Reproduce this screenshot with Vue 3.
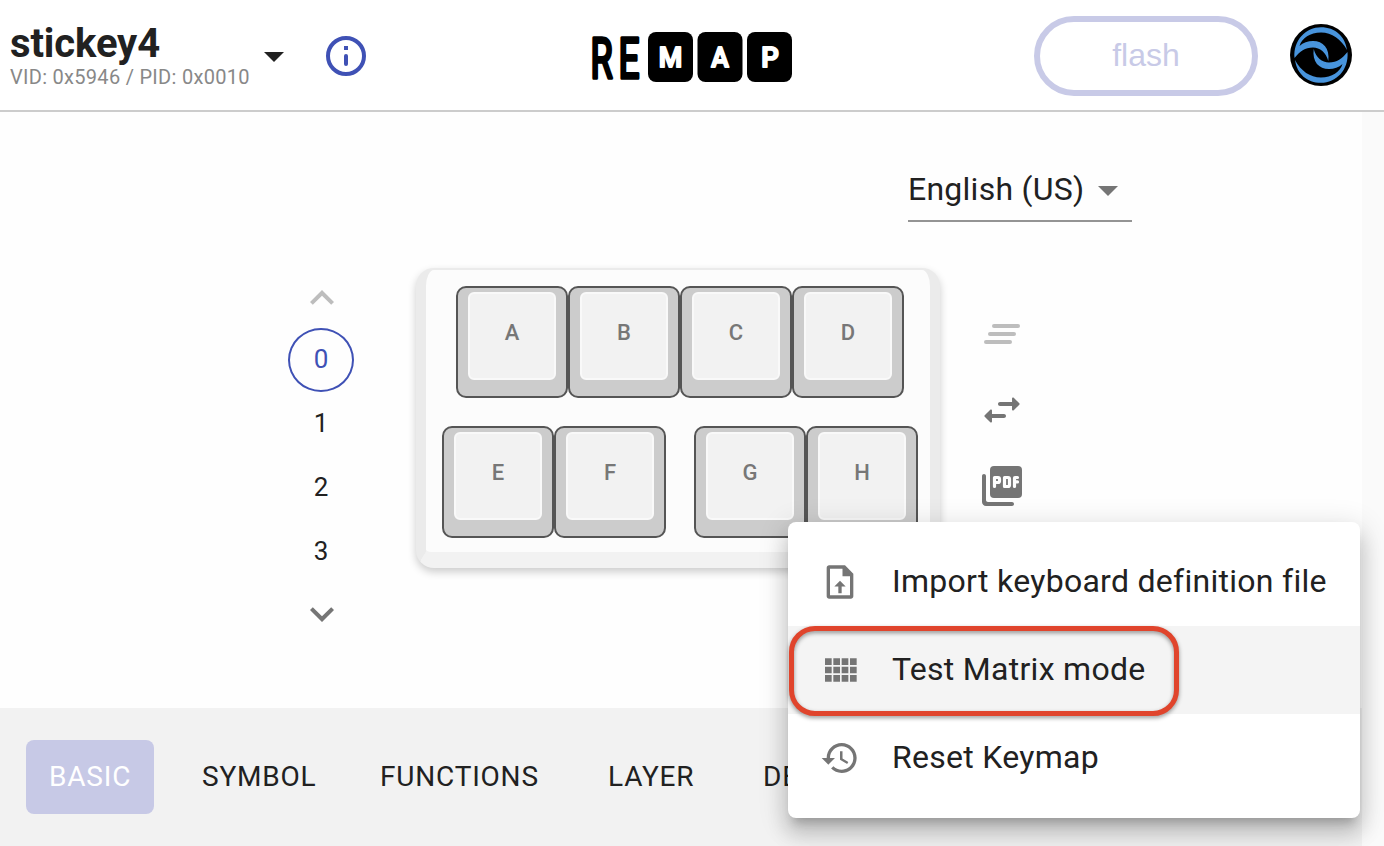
<script setup>
const layers = ['0', '1', '2', '3']
const rows = [
  [{ label: 'A' }, { label: 'B' }, { label: 'C' }, { label: 'D' }],
  [{ label: 'E' }, { label: 'F' }, { label: 'G', gap: true }, { label: 'H' }],
]
const tabs = ['BASIC', 'SYMBOL', 'FUNCTIONS', 'LAYER', 'DEVICE']
const swirl = 'M4.500 34C3 16 16 3.200 31 3.200C45 3.200 55 12 57 26C51 15 42 8.500 31 8.500C20 8.500 12 14 9.500 22C13 18.500 18 17 23 17C33 17 40 24 38.300 37C36 28.500 30 23.500 23 23.500C15 23.500 10 27.500 4.500 34z'
</script>

<template>
  <div class="page">
    <header class="header">
      <div class="device">
        <div class="device-name">stickey4</div>
        <div class="device-id">VID: 0x5946 / PID: 0x0010</div>
      </div>
      <svg class="caret" viewBox="0 0 20 10"><path d="M0 0h20L10 10z" /></svg>
      <svg class="info" viewBox="0 0 24 24">
        <circle cx="12" cy="12" r="9" fill="none" stroke="currentColor" stroke-width="2" />
        <rect x="11" y="7" width="2" height="2" />
        <rect x="11" y="11" width="2" height="6" rx="1" />
      </svg>
      <svg class="logo" viewBox="0 0 202 52">
        <g class="logo-dark">
          <text transform="translate(-.6 46.500) scale(.64 1)">R</text>
          <text transform="translate(27.500 46.500) scale(.66 1)">E</text>
        </g>
        <rect x="57" y="1" width="45" height="50" rx="8" />
        <rect x="106.500" y="1" width="45" height="50" rx="8" />
        <rect x="156" y="1" width="45" height="50" rx="8" />
        <g class="logo-light">
          <text x="79.500" y="35.800" textLength="23.500" lengthAdjust="spacingAndGlyphs">M</text>
          <text x="129" y="35.800" textLength="17.500" lengthAdjust="spacingAndGlyphs">A</text>
          <text x="179" y="35.800" textLength="17.500" lengthAdjust="spacingAndGlyphs">P</text>
        </g>
      </svg>
      <button class="flash">flash</button>
      <svg class="avatar" viewBox="0 0 62 62">
        <circle cx="31" cy="31" r="31" fill="#000" />
        <g fill="#4894dc">
          <path :d="swirl" />
          <path :d="swirl" transform="rotate(180 31 31)" />
        </g>
      </svg>
    </header>

    <main class="content">
      <div class="language">
        <span>English (US)</span>
        <svg class="select-caret" viewBox="0 0 20 10"><path d="M0 0h20L10 10z" /></svg>
      </div>

      <section class="workspace">
        <nav class="layers">
          <svg class="icon chevron faded" viewBox="0 0 24 24"><path d="M12 8l-6 6 1.410 1.410L12 10.830l4.590 4.580L18 14z" /></svg>
          <div v-for="(layer, i) in layers" :key="layer" class="layer" :class="{ active: i === 0 }">{{ layer }}</div>
          <svg class="icon chevron last" viewBox="0 0 24 24"><path d="M16.590 8.590L12 13.170 7.410 8.590 6 10l6 6 6-6z" /></svg>
        </nav>

        <div class="keyboard">
          <div v-for="(row, r) in rows" :key="r" class="key-row" :class="{ lower: r === 1 }">
            <div v-for="key in row" :key="key.label" class="key" :class="{ spaced: key.gap }">
              <div class="keycap">{{ key.label }}</div>
            </div>
          </div>
        </div>

        <div class="tools">
          <svg class="icon faded" viewBox="0 0 24 24">
            <rect x="7" y="7" width="14" height="2" rx="1" />
            <rect x="5" y="11" width="14" height="2" rx="1" />
            <rect x="3" y="15" width="14" height="2" rx="1" />
          </svg>
          <svg class="icon" viewBox="0 0 24 24"><path d="M6.140 11.860l-2.780 2.790c-.19.2-.19.51 0 .71l2.780 2.790c.31.32.85.09.85-.35V16H13c.55 0 1-.45 1-1s-.45-1-1-1H6.990v-1.790c0-.45-.54-.67-.85-.35zm14.510-3.210l-2.780-2.790c-.31-.32-.85-.09-.85.35V8H11c-.55 0-1 .45-1 1s.45 1 1 1h6.010v1.790c0 .45.54.67.85.35l2.780-2.790c.2-.19.2-.51.01-.7z" /></svg>
          <svg class="icon" viewBox="0 0 24 24">
            <rect x="6" y="2" width="16" height="16" rx="2" />
            <path d="M3 6c-.55 0-1 .45-1 1v13c0 1.100.9 2 2 2h13c.55 0 1-.45 1-1s-.45-1-1-1H5c-.55 0-1-.45-1-1V7c0-.55-.45-1-1-1z" />
            <path class="cutout" d="M8.250 12.250V7.750H10a.75.75 0 0 1 .75.75v1a.75.75 0 0 1-.75.75H8.250M13.250 7.750h1.750a.75.75 0 0 1 .75.75v3a.75.75 0 0 1-.75.75h-1.750zM18.250 12.250V8q0-.25.25-.25h1.250M18.250 9.950h1.500" />
          </svg>
        </div>
      </section>

      <nav class="tabs">
        <div v-for="(tab, i) in tabs" :key="tab" class="tab" :class="{ selected: i === 0 }"><span>{{ tab }}</span></div>
      </nav>
    </main>

    <div class="menu">
      <div class="menu-item">
        <svg class="menu-icon" viewBox="0 0 24 24">
          <path fill-rule="evenodd" d="M5.500 2H15l5 5v13.500c0 .83-.67 1.500-1.500 1.500h-13C4.670 22 4 21.330 4 20.500v-17C4 2.670 4.670 2 5.500 2zM6 4v16h12V8.500h-4.500V4z" />
          <path d="M12 11.200l3.400 3.500H13v4h-2v-4H8.600z" />
        </svg>
        <span>Import keyboard definition file</span>
      </div>
      <div class="menu-item hovered">
        <svg class="menu-icon" viewBox="0 0 24 24"><path d="M3 9h4V5H3v4zm0 5h4v-4H3v4zm5 0h4v-4H8v4zm5 0h4v-4h-4v4zM8 9h4V5H8v4zm5-4v4h4V5h-4zm5 9h4v-4h-4v4zM3 19h4v-4H3v4zm5 0h4v-4H8v4zm5 0h4v-4h-4v4zm5 0h4v-4h-4v4zm0-14v4h4V5h-4z" /></svg>
        <span>Test Matrix mode</span>
        <div class="highlight"></div>
      </div>
      <div class="menu-item">
        <svg class="menu-icon" viewBox="0 0 24 24"><path d="M13 3c-4.970 0-9 4.030-9 9H1l3.890 3.890.07.14L9 12H6c0-3.870 3.130-7 7-7s7 3.130 7 7-3.130 7-7 7c-1.930 0-3.680-.79-4.940-2.060l-1.420 1.420C8.270 19.990 10.510 21 13 21c4.970 0 9-4.030 9-9s-4.030-9-9-9zm-1 5v5l4.280 2.540.72-1.210-3.500-2.080V8H12z" /></svg>
        <span>Reset Keymap</span>
      </div>
    </div>
  </div>
</template>

<style>
body { margin: 0; overflow: hidden; }
</style>

<style scoped>
.page {
  position: relative;
  box-sizing: border-box;
  width: 1384px;
  height: 846px;
  overflow: hidden;
  background: #fafafa;
  color: #212121;
  font-family: Roboto, "Liberation Sans", sans-serif;
}
.page * { box-sizing: border-box; }
svg { display: block; flex: none; fill: currentColor; }
.header {
  display: flex;
  align-items: flex-start;
  height: 112px;
  background: #fff;
  border-bottom: 2px solid #ccc;
}
.device { width: 254px; padding: 21px 0 0 10px; white-space: nowrap; }
.device-name { font-size: 40px; line-height: 45px; font-weight: 700; letter-spacing: -0.12px; }
.device-id { font-size: 20px; line-height: 22px; letter-spacing: 0.29px; color: #888; }
.caret { width: 20px; height: 10px; margin: 52px 0 0 10px; }
.info { width: 48px; height: 48px; margin: 32px 0 0 38px; color: #3f51b5; }
.logo { width: 202px; height: 52px; margin: 31px 0 0 221px; fill: #000; overflow: visible; }
.logo-dark { font: 400 56px Roboto, sans-serif; stroke: #000; stroke-width: 3.6; stroke-linejoin: round; }
.logo-light { font: 500 28px Roboto, sans-serif; fill: #fff; stroke: #fff; stroke-width: 2; stroke-linejoin: round; text-anchor: middle; }
.flash {
  width: 224px;
  height: 80px;
  margin: 16px 0 0 241px;
  padding: 0 0 2px;
  border: 6px solid #c8cae7;
  border-radius: 40px;
  background: #fff;
  color: #c8cae7;
  font: 32px "Liberation Sans", sans-serif;
}
.avatar { width: 62px; height: 62px; margin: 24px 0 0 32px; }
.content {
  display: flex;
  flex-direction: column;
  width: 1362px;
  height: 734px;
  background: #fefefe;
}
.language {
  display: flex;
  align-items: center;
  width: 224px;
  height: 64px;
  margin: 46px 0 0 908px;
  border-bottom: 2px solid #949494;
  font-size: 32px;
  letter-spacing: 0.25px;
}
.language span { width: 190px; white-space: nowrap; }
.select-caret { width: 20px; height: 10px; margin-top: 3px; color: #757575; }
.workspace { display: flex; align-items: flex-start; height: 486px; padding: 46px 0 0 288px; }
.icon { width: 48px; height: 48px; color: #757575; }
.cutout { fill: none; stroke: #fefefe; stroke-width: 1.6; stroke-linecap: round; stroke-linejoin: round; }
.faded { color: #bdbdbd; }
.layers { display: flex; flex-direction: column; width: 66px; margin-top: 6px; }
.chevron { margin: 0 0 6px 10px; }
.chevron.last { margin: 6px 0 0 10px; }
.layer {
  display: flex;
  align-items: center;
  justify-content: center;
  height: 64px;
  padding-bottom: 3px;
  border: 2px solid transparent;
  border-radius: 50%;
  font-size: 26px;
}
.layer.active { border-color: #3f51b5; color: #3f51b5; }
.keyboard {
  width: 524px;
  height: 300px;
  margin-left: 62px;
  padding-top: 16px;
  border: solid #ebebeb;
  border-width: 2px 10px 16px;
  border-bottom-color: #f2f2f2;
  border-radius: 18px;
  background: #fcfcfc;
  box-shadow: 0 4px 8px rgba(0, 0, 0, 0.2);
}
.key-row { display: flex; padding-left: 30px; }
.key-row.lower { padding-left: 16px; margin-top: 28px; }
.key {
  flex: none;
  width: 112px;
  height: 112px;
  padding: 4px 10px;
  border: 2px solid #555;
  border-radius: 10px;
  background: #ccc;
}
.key.spaced { margin-left: 28px; }
.keycap {
  width: 88px;
  height: 88px;
  padding-top: 26px;
  border: 2px solid #f9f9f9;
  border-radius: 6px;
  background: #f2f2f2;
  color: #777;
  font-size: 22px;
  line-height: 26px;
  font-weight: 500;
  text-align: center;
}
.tools { display: flex; flex-direction: column; gap: 28px; margin: 42px 0 0 38px; }
.tabs {
  display: grid;
  grid-template-columns: 176px 178px 228px 155px 200px;
  height: 138px;
  padding: 32px 0 0 26px;
  background: #f2f2f2;
  font-size: 28px;
  line-height: 74px;
  letter-spacing: 0.8px;
}
.tab { height: 74px; }
.tab.selected { width: 128px; padding-left: 23px; border-radius: 8px; background: #c7c9e6; color: #fff; }
.menu {
  position: absolute;
  left: 788px;
  top: 522px;
  width: 572px;
  height: 296px;
  padding: 16px 0;
  border-radius: 8px;
  background: #fff;
  box-shadow: 0 10px 10px -6px rgba(0, 0, 0, 0.2), 0 16px 20px 2px rgba(0, 0, 0, 0.14), 0 6px 28px 4px rgba(0, 0, 0, 0.12);
}
.menu-item {
  position: relative;
  display: flex;
  align-items: center;
  height: 88px;
  padding-left: 32px;
  font-size: 32px;
  letter-spacing: 0.28px;
  white-space: nowrap;
}
.menu-item span { padding-bottom: 2px; }
.hovered { background: #f4f4f4; }
.menu-icon { width: 40px; height: 40px; margin-right: 32px; color: #757575; }
.highlight {
  position: absolute;
  left: 1px;
  top: 0;
  width: 390px;
  height: 90px;
  border: 5px solid #e0442c;
  border-radius: 26px;
  filter: drop-shadow(0 2px 2px rgba(0, 0, 0, 0.4));
}
</style>
